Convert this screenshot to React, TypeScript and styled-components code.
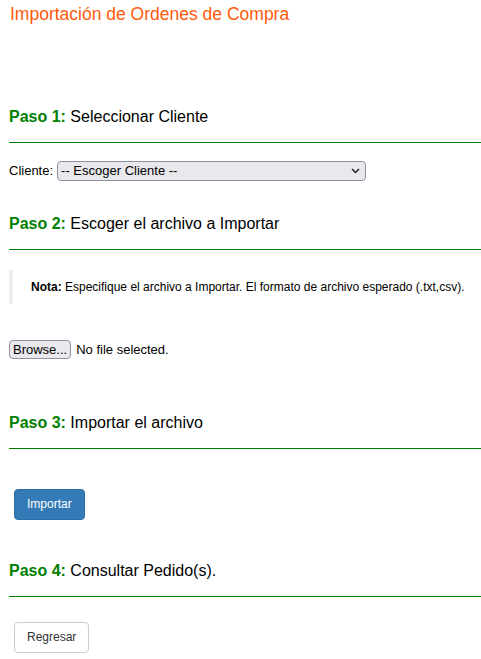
import React from "react";
import styled, { createGlobalStyle } from "styled-components";

const Global = createGlobalStyle`
  html, body { margin: 0; padding: 0; background: #fff; }
  body { font-family: "Liberation Sans", Arial, sans-serif; color: #000; }
`;

const Page = styled.div`
  padding: 0 0 0 9px;
  display: flex;
  flex-direction: column;
  align-items: stretch;
`;

const Title = styled.h1`
  margin: 0;
  padding-top: 4px;
  font-size: 17.5px;
  line-height: 20px;
  font-weight: normal;
  color: #ff5a0a;
  padding-left: 1px;
`;

const StepHeader = styled.h2<{ $top: number }>`
  margin: ${(p) => p.$top}px 0 0 0;
  padding-bottom: 16px;
  font-size: 16px;
  line-height: 18px;
  font-weight: normal;
  border-bottom: 1px solid #008000;
`;

const StepLabel = styled.b`
  color: #008000;
  font-weight: bold;
`;

const FieldRow = styled.div<{ $top: number }>`
  margin-top: ${(p) => p.$top}px;
  display: flex;
  align-items: center;
  gap: 4px;
  font-size: 13px;
  line-height: 20px;
`;

const SelectWrap = styled.div`
  position: relative;
  width: 309px;
  height: 20px;
`;

const Select = styled.select`
  appearance: none;
  -webkit-appearance: none;
  width: 100%;
  height: 20px;
  box-sizing: border-box;
  border: 1px solid #8f8f9d;
  border-radius: 4px;
  background: #e9e9ed;
  font-family: "Liberation Sans", Arial, sans-serif;
  font-size: 13px;
  color: #000;
  padding: 0 20px 0 3px;
  line-height: 18px;
`;

const Chevron = styled.svg`
  position: absolute;
  right: 6px;
  top: 6px;
  width: 9px;
  height: 8px;
  pointer-events: none;
`;

const Note = styled.blockquote`
  margin: 20px 0 0 0;
  border-left: 4px solid #eeeeee;
  padding: 0 0 0 18px;
  height: 34px;
  display: flex;
  align-items: center;
  font-size: 12px;
  color: #000;
`;

const FileRow = styled.div`
  margin-top: 36px;
  display: flex;
  align-items: center;
  gap: 5px;
  font-size: 13px;
`;

const BrowseButton = styled.button`
  font-family: "Liberation Sans", Arial, sans-serif;
  font-size: 13px;
  height: 19px;
  padding: 0 3px;
  border: 1px solid #8f8f9d;
  border-radius: 4px;
  background: #e9e9ed;
  color: #000;
  line-height: 17px;
`;

const ActionButton = styled.button<{ $primary?: boolean; $top: number }>`
  align-self: flex-start;
  margin: ${(p) => p.$top}px 0 0 5px;
  font-family: "Liberation Sans", Arial, sans-serif;
  font-size: 12px;
  line-height: 17px;
  padding: 6px 12px;
  border-radius: 4px;
  border: 1px solid ${(p) => (p.$primary ? "#2e6da4" : "#cccccc")};
  background: ${(p) => (p.$primary ? "#337ab7" : "#ffffff")};
  color: ${(p) => (p.$primary ? "#ffffff" : "#333333")};
`;

export default function App() {
  return (
    <>
      <Global />
      <Page>
        <Title>Importación de Ordenes de Compra</Title>

        <StepHeader $top={84}>
          <StepLabel>Paso 1:</StepLabel> Seleccionar Cliente
        </StepHeader>
        <FieldRow $top={18}>
          <span>Cliente:</span>
          <SelectWrap>
            <Select defaultValue="">
              <option value="">-- Escoger Cliente --</option>
            </Select>
            <Chevron viewBox="0 0 9 8">
              <path d="M1 2 L4.5 5.5 L8 2" fill="none" stroke="#222" strokeWidth="1.5" />
            </Chevron>
          </SelectWrap>
        </FieldRow>

        <StepHeader $top={34}>
          <StepLabel>Paso 2:</StepLabel> Escoger el archivo a Importar
        </StepHeader>
        <Note>
          <span>
            <b>Nota:</b> Especifique el archivo a Importar. El formato de archivo esperado (.txt,csv).
          </span>
        </Note>
        <FileRow>
          <BrowseButton>Browse...</BrowseButton>
          <span>No file selected.</span>
        </FileRow>

        <StepHeader $top={55}>
          <StepLabel>Paso 3:</StepLabel> Importar el archivo
        </StepHeader>
        <ActionButton $primary $top={40}>Importar</ActionButton>

        <StepHeader $top={42}>
          <StepLabel>Paso 4:</StepLabel> Consultar Pedido(s).
        </StepHeader>
        <ActionButton $top={25}>Regresar</ActionButton>
      </Page>
    </>
  );
}
